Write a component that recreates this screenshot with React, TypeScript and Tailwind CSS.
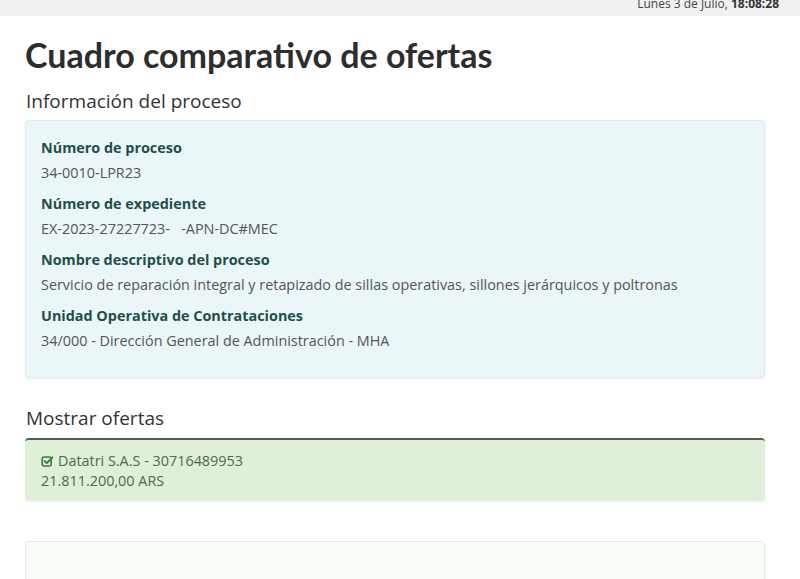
import React from "react";

interface InfoRow {
  label: string;
  value: string;
}

const rows: InfoRow[] = [
  { label: "Número de proceso", value: "34-0010-LPR23" },
  { label: "Número de expediente", value: "EX-2023-27227723-\u00a0\u00a0\u00a0-APN-DC#MEC" },
  {
    label: "Nombre descriptivo del proceso",
    value: "Servicio de reparación integral y retapizado de sillas operativas, sillones jerárquicos y poltronas",
  },
  { label: "Unidad Operativa de Contrataciones", value: "34/000 - Dirección General de Administración - MHA" },
];

const CheckSquare = () => (
  <svg width="13" height="13" viewBox="0 0 16 16" className="inline-block mr-1 -mt-0.5">
    <rect x="1.5" y="2.5" width="11" height="11" rx="2" fill="none" stroke="#3f7a3f" strokeWidth="2" />
    <path d="M4.5 7.5 L7 10 L14 3" fill="none" stroke="#3f7a3f" strokeWidth="2.4" strokeLinecap="round" strokeLinejoin="round" />
  </svg>
);

export default function App() {
  return (
    <div className="w-[800px] h-[579px] overflow-hidden bg-white" style={{ fontFamily: '"Open Sans", sans-serif' }}>
      {/* Top bar, scrolled so the clock is half cut */}
      <div className="h-4 bg-[#f1f1f1] flex items-end justify-end pr-[21px] overflow-hidden">
        <span className="text-[12px] leading-[14px] text-[#444] mb-[5px] shrink-0">
          Lunes 3 de Julio, <b className="text-[#333]">18:08:28</b>
        </span>
      </div>

      <div className="px-[25px]">
        <h1 className="mt-[16px] text-[34px] leading-[46px] font-bold text-[#2d2d2d]" style={{ fontFamily: 'Lato, sans-serif' }}>
          Cuadro comparativo de ofertas
        </h1>
        <h2 className="mt-[11px] text-[19px] leading-[24px] text-[#333] pl-[1px]">Información del proceso</h2>

        <div className="mt-[7px] w-[740px] h-[258px] bg-[#ebf6f8] border border-[#e0eced] rounded shadow-[0_1px_3px_rgba(0,0,0,0.08)] px-[15px] pt-[17px]">
          {rows.map((r) => (
            <div key={r.label} className="mb-[10px]">
              <div className="text-[14.4px] leading-[20px] font-bold text-[#1f4f4a]">{r.label}</div>
              <div className="mt-[4px] text-[14.4px] leading-[22px] text-[#555]">{r.value}</div>
            </div>
          ))}
        </div>

        <h2 className="mt-[28px] text-[19px] leading-[24px] text-[#333] pl-[1px]">Mostrar ofertas</h2>

        <div className="mt-[8px] w-[740px] h-[63px] bg-[#dfefd8] border-t-2 border-[#5a5a5a] rounded-[4px] shadow-[0_1px_2px_rgba(0,0,0,0.06)] px-[16px] pt-[11px] text-[14.4px] leading-[20px] text-[#4c6b4c]">
          <div>
            <CheckSquare />
            Datatri S.A.S - 30716489953
          </div>
          <div>21.811.200,00 ARS</div>
        </div>

        <div className="mt-[40px] w-[740px] h-[60px] bg-[#f8fdf7] border border-[#e6e9e6] rounded-[4px]" />
      </div>
    </div>
  );
}
